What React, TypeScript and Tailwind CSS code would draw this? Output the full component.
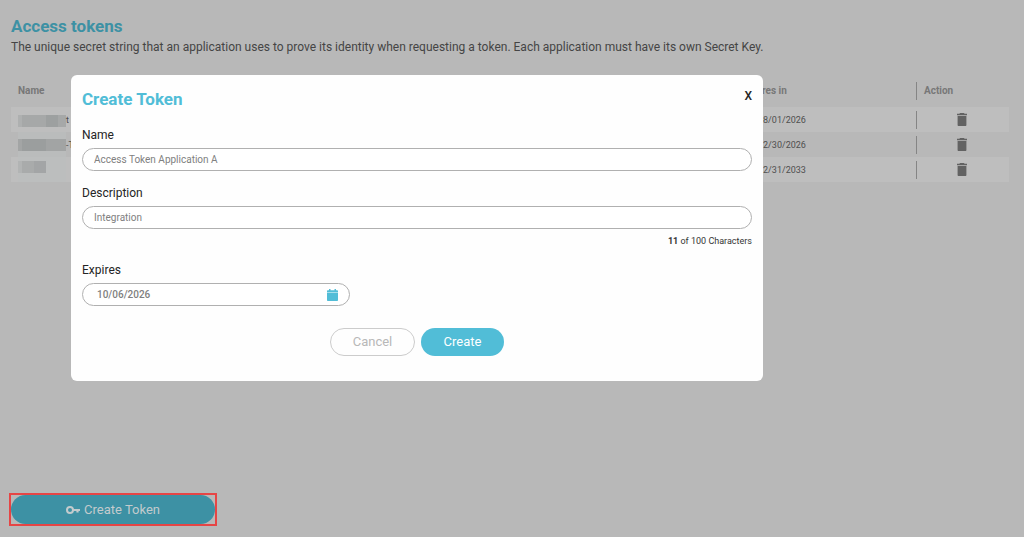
import { useState } from "react";

type Token = {
  id: number;
  suffix: string;
  expires: string;
  mask: string;
  shades: string[];
};

const tokens: Token[] = [
  {
    id: 1,
    suffix: "t",
    expires: "08/01/2026",
    mask: "items-end pb-[5px]",
    shades: ["w-1 bg-[#aeb0b0]", "w-6 bg-[#a6a8a8]", "w-3 bg-[#9da0a0]", "w-2 bg-[#a6a8a8]"],
  },
  {
    id: 2,
    suffix: "-T",
    expires: "12/30/2026",
    mask: "items-center bg-[#babcbc]",
    shades: ["w-1 bg-[#a3a5a5]", "w-6 bg-[#9b9e9e]", "w-5 bg-[#a2a4a4]"],
  },
  {
    id: 3,
    suffix: "",
    expires: "12/31/2033",
    mask: "items-start bg-[#bcbebe] pt-1",
    shades: ["w-1 bg-[#b2b4b4]", "w-3 bg-[#a9abab]", "w-3 bg-[#a3a5a6]"],
  },
];

function TrashIcon() {
  return (
    <svg viewBox="0 0 10 13" className="h-[13px] w-[10px]" fill="currentColor" aria-hidden="true">
      <path d="M3 0h4l.6.8H10v1.400H0V.8h2.400zM.6 3h8.800v9c0 .6-.4 1-1 1H1.600c-.6 0-1-.4-1-1z" />
    </svg>
  );
}

function KeyIcon() {
  return (
    <svg viewBox="0 0 14 10" className="h-[10px] w-[14px]" fill="none" stroke="currentColor" aria-hidden="true">
      <circle cx="4" cy="5" r="3" strokeWidth="2" />
      <path d="M7 5h7M11.500 5v2.500" strokeWidth="2.200" />
    </svg>
  );
}

function CalendarIcon() {
  return (
    <svg viewBox="0 0 11 12" className="h-3 w-[11px] text-[#51bdd7]" fill="currentColor" aria-hidden="true">
      <path d="M2 0h1.500v1.300h4V0H9v1.300h1c.6 0 1 .4 1 1v1.100H0V2.300c0-.6.4-1 1-1h1zM0 4.100h11V11c0 .6-.4 1-1 1H1c-.6 0-1-.4-1-1z" />
    </svg>
  );
}

function Divider() {
  return <span className="block h-[18px] w-px bg-[#858585]" />;
}

function TokenTable() {
  return (
    <table className="mt-[22px] w-full table-fixed border-collapse text-left">
      <colgroup>
        <col />
        <col className="w-[175px]" />
        <col className="w-[93px]" />
      </colgroup>
      <thead>
        <tr className="h-[26px] text-[10px] leading-3 text-[#777777]">
          <th className="p-0 pl-[7px] font-bold">Name</th>
          <th className="p-0 pl-[2px] font-bold">Expires in</th>
          <th className="p-0">
            <div className="flex items-center gap-[7px] font-bold">
              <Divider />
              Action
            </div>
          </th>
        </tr>
        <tr className="h-[3px]" aria-hidden="true" />
      </thead>
      <tbody>
        {tokens.map((token) => (
          <tr key={token.id} className="h-[25px] text-[9px] leading-3 text-[#4f4f4f] odd:bg-[#bebebe]">
            <td className="p-0 pl-[7px]">
              <div className="flex items-center">
                <span className={`flex h-[25px] w-12 ${token.mask}`}>
                  {token.shades.map((shade, i) => (
                    <span key={i} className={`h-3 ${shade}`} />
                  ))}
                </span>
                <span>{token.suffix}</span>
              </div>
            </td>
            <td className="p-0 pl-[17px]">{token.expires}</td>
            <td className="p-0">
              <div className="flex items-center">
                <Divider />
                <button type="button" aria-label="Delete token" className="ml-10 text-[#626262]">
                  <TrashIcon />
                </button>
              </div>
            </td>
          </tr>
        ))}
      </tbody>
    </table>
  );
}

const fieldClass =
  "mt-[5px] block h-[23px] w-full rounded-full border border-[#b0b0b0] bg-white px-[11px] text-[10px] text-[#808080] outline-none";
const labelClass = "block text-[12px] leading-4 text-[#252525]";

function CreateTokenDialog() {
  const [name, setName] = useState("Access Token Application A");
  const [description, setDescription] = useState("Integration");
  const [expires, setExpires] = useState("10/06/2026");

  return (
    <div
      role="dialog"
      aria-labelledby="dialog-title"
      className="w-full max-w-[692px] rounded-md bg-[#fefefe] px-[11px] pt-3 pb-[25px]"
    >
      <div className="flex items-start justify-between">
        <h2 id="dialog-title" className="text-[17px] leading-6 font-bold text-[#51bdd7]">
          Create Token
        </h2>
        <button type="button" className="text-[12px] leading-[18px] font-medium text-[#252525]">
          X
        </button>
      </div>
      <form onSubmit={(e) => e.preventDefault()}>
        <label htmlFor="name" className={`${labelClass} mt-4`}>Name</label>
        <input id="name" value={name} onChange={(e) => setName(e.target.value)} className={fieldClass} />
        <label htmlFor="description" className={`${labelClass} mt-[14px]`}>Description</label>
        <input
          id="description"
          value={description}
          maxLength={100}
          onChange={(e) => setDescription(e.target.value)}
          className={fieldClass}
        />
        <p className="mt-1 text-right text-[9px] leading-4 text-[#353535]">
          <strong>{description.length}</strong> of 100 Characters
        </p>
        <label htmlFor="expires" className={`${labelClass} mt-[13px]`}>Expires</label>
        <div className="mt-[5px] flex h-[23px] w-[268px] items-center rounded-full border border-[#b0b0b0] bg-white pr-[11px] pl-[14px]">
          <input
            id="expires"
            value={expires}
            onChange={(e) => setExpires(e.target.value)}
            className="min-w-0 flex-1 text-[10px] font-medium text-[#808080] outline-none"
          />
          <button type="button" aria-label="Choose date">
            <CalendarIcon />
          </button>
        </div>
        <div className="mt-[22px] flex justify-center gap-[6px] text-[13px]">
          <button type="button" className="h-7 w-[85px] rounded-full border border-[#cccccc] text-[#b8b8b8]">
            Cancel
          </button>
          <button type="submit" className="h-7 w-[83px] rounded-full bg-[#51bdd7] text-white">
            Create
          </button>
        </div>
      </form>
    </div>
  );
}

export default function App() {
  return (
    <div className="flex min-h-screen flex-col justify-between bg-[#b8b8b8] font-[Roboto,sans-serif]">
      <main className="pt-[14px] pr-[15px] pl-[11px]">
        <h1 className="text-[17px] leading-6 font-bold text-[#3d91a4]">Access tokens</h1>
        <p className="text-[12px] leading-[18px] text-[#454545]">
          The unique secret string that an application uses to prove its identity when requesting a token. Each
          application must have its own Secret Key.
        </p>
        <TokenTable />
      </main>
      <footer className="px-[9px] pb-[11px]">
        <div className="w-[208px] border-2 border-[#e64545]">
          <button
            type="button"
            className="flex h-[29px] w-full items-center justify-center gap-1 rounded-full bg-[#3d91a4] text-[13px] text-[#c3cbcd]"
          >
            <KeyIcon />
            Create Token
          </button>
        </div>
      </footer>
      <div className="fixed inset-0 pt-[75px] pr-4 pl-[71px]">
        <CreateTokenDialog />
      </div>
    </div>
  );
}
